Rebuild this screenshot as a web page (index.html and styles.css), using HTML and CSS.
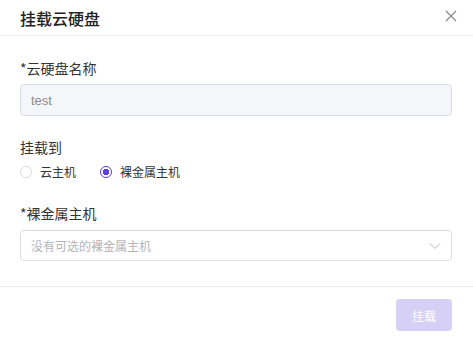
FILE: index.html
```html
<!DOCTYPE html>
<html lang="zh-CN">
<head>
  <meta charset="UTF-8">
  <meta name="viewport" content="width=device-width, initial-scale=1.0">
  <title>挂载云硬盘</title>
  <link rel="stylesheet" href="styles.css">
</head>
<body>
  <div class="dialog">
    <div class="dialog-header">
      <h2 class="dialog-title">挂载云硬盘</h2>
      <span class="close">
        <svg width="12" height="12" viewBox="0 0 12 12"><path d="M1 1L11 11M11 1L1 11" stroke="#8a8a8a" stroke-width="1.2" fill="none"/></svg>
      </span>
    </div>

    <div class="dialog-body">
      <div class="field">
        <label class="field-label">*云硬盘名称</label>
        <div class="input-field disabled">test</div>
      </div>

      <div class="field">
        <label class="field-label">挂载到</label>
        <div class="radio-group">
          <span class="radio"><span class="radio-dot"></span>云主机</span>
          <span class="radio checked"><span class="radio-dot"></span>裸金属主机</span>
        </div>
      </div>

      <div class="field">
        <label class="field-label">*裸金属主机</label>
        <div class="input-field select">
          <span class="placeholder">没有可选的裸金属主机</span>
          <svg width="12" height="8" viewBox="0 0 12 8"><path d="M1 1.5L6 6.5L11 1.5" stroke="#b8b8be" stroke-width="1" fill="none"/></svg>
        </div>
      </div>
    </div>

    <div class="dialog-footer">
      <button class="btn" disabled>挂载</button>
    </div>
  </div>
</body>
</html>
```

FILE: styles.css
```css
:root {
  --primary-color: #5b3fd9;
  --primary-light-color: #d6d0f6;
  --border-color: #dcdde2;
  --text-color: #333;
}

body {
  margin: 0;
  font-family: "Noto Sans CJK SC", "Liberation Sans", sans-serif;
  color: var(--text-color);
  background-color: #fff;
}

.dialog {
  width: 473px;
  height: 339px;
  background-color: #fff;
}

.dialog-header {
  height: 35px;
  padding: 0 12px 0 20px;
  display: flex;
  align-items: center;
  justify-content: space-between;
  border-bottom: 1px solid #ececec;
}

.dialog-title {
  margin: 0;
  font-size: 16px;
  font-weight: 500;
  color: #222;
}

.close {
  display: flex;
  width: 20px;
  height: 20px;
  align-items: center;
  justify-content: center;
  margin-top: -4px;
}

.dialog-body {
  padding: 22px 21px 25px 20px;
}

.field + .field {
  margin-top: 21px;
}

.field-label {
  display: block;
  font-size: 14px;
  line-height: 20px;
  margin-bottom: 6px;
}

.input-field {
  box-sizing: border-box;
  height: 32px;
  padding: 0 10px;
  border: 1px solid var(--border-color);
  border-radius: 4px;
  display: flex;
  align-items: center;
  font-size: 13px;
}

.input-field.disabled {
  background-color: #f5f6fa;
  color: #8a8a8a;
  font-family: "Liberation Sans", sans-serif;
}

.input-field.select {
  justify-content: space-between;
  padding-right: 10px;
  height: 31px;
  margin-top: 7px;
}

.placeholder {
  font-size: 12px;
  color: #b4b4b8;
}

.radio-group {
  display: flex;
  gap: 24px;
  margin-top: -1px;
}

.radio {
  display: flex;
  align-items: center;
  font-size: 12px;
  line-height: 20px;
}

.radio-dot {
  box-sizing: border-box;
  width: 12px;
  height: 12px;
  border: 1px solid #dadada;
  border-radius: 50%;
  margin-right: 8px;
}

.radio.checked .radio-dot {
  border-color: var(--primary-color);
  background: radial-gradient(circle, var(--primary-color) 0 3px, #fff 3.5px);
}

.dialog-footer {
  border-top: 1px solid #ececec;
  padding: 12px 21px 0 0;
  display: flex;
  justify-content: flex-end;
}

.btn {
  width: 56px;
  height: 32px;
  border: none;
  border-radius: 4px;
  background-color: var(--primary-color);
  color: #fff;
  font-family: inherit;
  font-size: 12px;
}

.btn:disabled {
  background-color: var(--primary-light-color);
}
```
